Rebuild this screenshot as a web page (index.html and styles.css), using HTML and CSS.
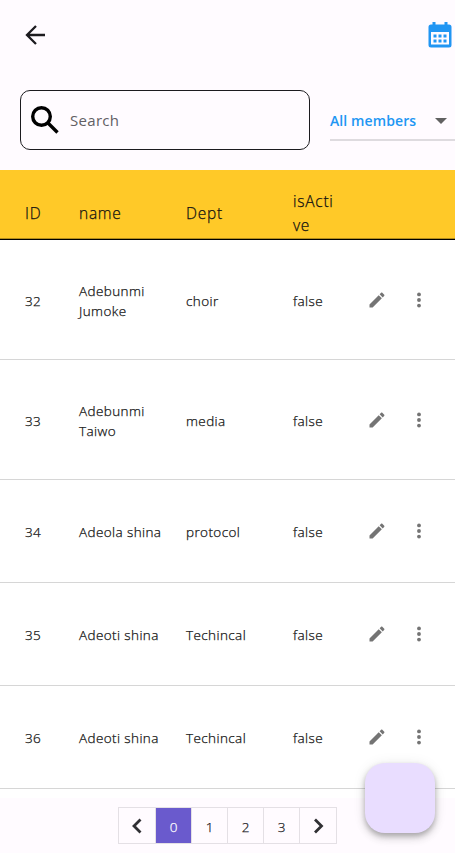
FILE: index.html
```html
<!DOCTYPE html>
<html lang="en">
<head>
<meta charset="utf-8">
<title>Members</title>
<link rel="stylesheet" href="styles.css">
</head>
<body>
<svg class="defs" aria-hidden="true">
  <symbol id="edit" viewBox="0 0 24 24"><path d="M3 17.25V21h3.75L17.81 9.94l-3.75-3.75L3 17.25zM20.71 7.04c.39-.39.39-1.02 0-1.41l-2.34-2.34c-.39-.39-1.02-.39-1.41 0l-1.83 1.83 3.75 3.75 1.83-1.83z"/></symbol>
  <symbol id="more" viewBox="0 0 24 24"><circle cx="12" cy="5.300" r="2.300"/><circle cx="12" cy="12" r="2.300"/><circle cx="12" cy="18.700" r="2.300"/></symbol>
</svg>
<header class="appbar">
  <svg class="back" viewBox="0 0 24 24"><path d="M22 12H4M13 3L4 12l9 9"/></svg>
  <svg class="calendar" viewBox="0 0 24 26"><path fill-rule="evenodd" d="M4.500 0h3v2.500h9V0h3v2.500H21a2.500 2.500 0 0 1 2.500 2.500v18a2.500 2.500 0 0 1-2.500 2.500H3A2.500 2.500 0 0 1 .5 23V5A2.500 2.500 0 0 1 3 2.500h1.500zM3 10v12.500h18V10z"/><path d="M5.500 12.500h3v3h-3zM10.500 12.500h3v3h-3zM15.500 12.500h3v3h-3zM5.500 17.500h3v3h-3zM10.500 17.500h3v3h-3zM15.500 17.500h3v3h-3z"/></svg>
</header>
<section class="filters">
  <div class="search">
    <svg viewBox="0 0 28 28"><circle cx="10.500" cy="10.500" r="8.800"/><path d="M16.500 16.500l10 10"/></svg>
    <span>Search</span>
  </div>
  <div class="select"><span>All members</span><i class="caret"></i></div>
</section>
<main class="table">
  <div class="row head"><span>ID</span><span>name</span><span>Dept</span><span>isActi<br>ve</span></div>
  <div class="row tall"><span>32</span><span>Adebunmi<br>Jumoke</span><span>choir</span><span>false</span><svg><use href="#edit"/></svg><svg><use href="#more"/></svg></div>
  <div class="row tall"><span>33</span><span>Adebunmi<br>Taiwo</span><span>media</span><span>false</span><svg><use href="#edit"/></svg><svg><use href="#more"/></svg></div>
  <div class="row"><span>34</span><span>Adeola shina</span><span>protocol</span><span>false</span><svg><use href="#edit"/></svg><svg><use href="#more"/></svg></div>
  <div class="row"><span>35</span><span>Adeoti shina</span><span>Techincal</span><span>false</span><svg><use href="#edit"/></svg><svg><use href="#more"/></svg></div>
  <div class="row"><span>36</span><span>Adeoti shina</span><span>Techincal</span><span>false</span><svg><use href="#edit"/></svg><svg><use href="#more"/></svg></div>
</main>
<nav class="pager">
  <span><svg viewBox="0 0 24 24"><path d="M15.500 5.500L9 12l6.500 6.500"/></svg></span>
  <span class="current">0</span><span>1</span><span>2</span><span>3</span>
  <span><svg viewBox="0 0 24 24"><path d="M9 5.500l6.500 6.500L9 18.500"/></svg></span>
</nav>
<div class="fab"></div>
</body>
</html>
```
FILE: styles.css
```css
* { box-sizing: border-box; }
body {
  margin: 0;
  height: 853px;
  overflow: hidden;
  position: relative;
  background: #fffbff;
  color: #1c1b1f;
  font-family: "Open Sans", "Noto Sans", sans-serif;
}
svg { display: block; }
.defs { position: absolute; width: 0; height: 0; }
.appbar {
  height: 70px;
  padding: 0 3px 0 23px;
  display: flex;
  align-items: center;
  justify-content: space-between;
}
.back { width: 24px; height: 24px; fill: none; stroke: #1c1b1f; stroke-width: 2.300; }
.calendar { width: 24px; height: 26px; fill: #2196f3; }
.filters { height: 100px; padding: 20px 0 0 20px; display: flex; gap: 20px; }
.search {
  width: 290px;
  height: 60px;
  flex: none;
  border: 1px solid #1c1b1f;
  border-radius: 10px;
  padding-left: 10px;
  display: flex;
  align-items: center;
  gap: 11px;
  color: #625f64;
  font-size: 15px;
  letter-spacing: 0.300px;
}
.search svg { width: 28px; height: 28px; fill: none; stroke: #000; stroke-width: 3.400; }
.select {
  flex: 1;
  height: 51px;
  padding: 12px 8px 0 0;
  border-bottom: 2px solid #dedbdf;
  display: flex;
  align-items: center;
  justify-content: space-between;
  color: #2196f3;
  font-size: 14px;
  font-weight: 600;
  letter-spacing: 0.100px;
  white-space: nowrap;
}
.caret { border: 6.500px solid transparent; border-top-color: #616161; border-bottom: 0; }
.table { height: 628px; background: #fff; }
.row {
  height: 103px;
  padding-left: 25px;
  border-bottom: 1px solid #d6d6d6;
  display: grid;
  grid-template-columns: 54px 107px 107px 74px 42px 42px;
  align-items: center;
  color: #111;
  font-size: 13.500px;
  font-weight: 300;
  line-height: 20px;
  letter-spacing: 0.400px;
  -webkit-text-stroke: 0.250px currentColor;
}
.row svg { width: 20px; height: 20px; fill: #747474; }
.row span { padding-top: 2px; }
.tall { height: 120px; }
.head {
  height: 70px;
  padding-top: 15px;
  background: #ffc928;
  border-bottom: 1px solid #000;
  box-shadow: inset 0 -1px #b38d1c;
  font-size: 15.500px;
  line-height: 24px;
  letter-spacing: 0.750px;
}
.pager {
  width: 219px;
  height: 37px;
  margin: 9px 0 0 118px;
  border: 1px solid #e4e0e5;
  display: grid;
  grid-template-columns: repeat(5, 36px) 37px;
  font-size: 13.500px;
  font-weight: 300;
  -webkit-text-stroke: 0.250px currentColor;
}
.pager span { display: flex; align-items: center; justify-content: center; border-left: 1px solid #e4e0e5; padding-top: 2px; }
.pager span:first-child { border-left: 0; padding-top: 0; }
.pager span:last-child { padding-top: 0; }
.pager .current { background: #6a5acd; color: #fff; }
.pager svg { width: 24px; height: 24px; fill: none; stroke: #303034; stroke-width: 2.800; }
.fab {
  position: absolute;
  left: 365px;
  top: 763px;
  width: 70px;
  height: 70px;
  border-radius: 20px;
  background: #e9ddff;
  box-shadow: 0 3px 5px rgba(0,0,0,.2), 0 5px 10px rgba(0,0,0,.14), 0 1px 14px rgba(0,0,0,.08);
}
```
